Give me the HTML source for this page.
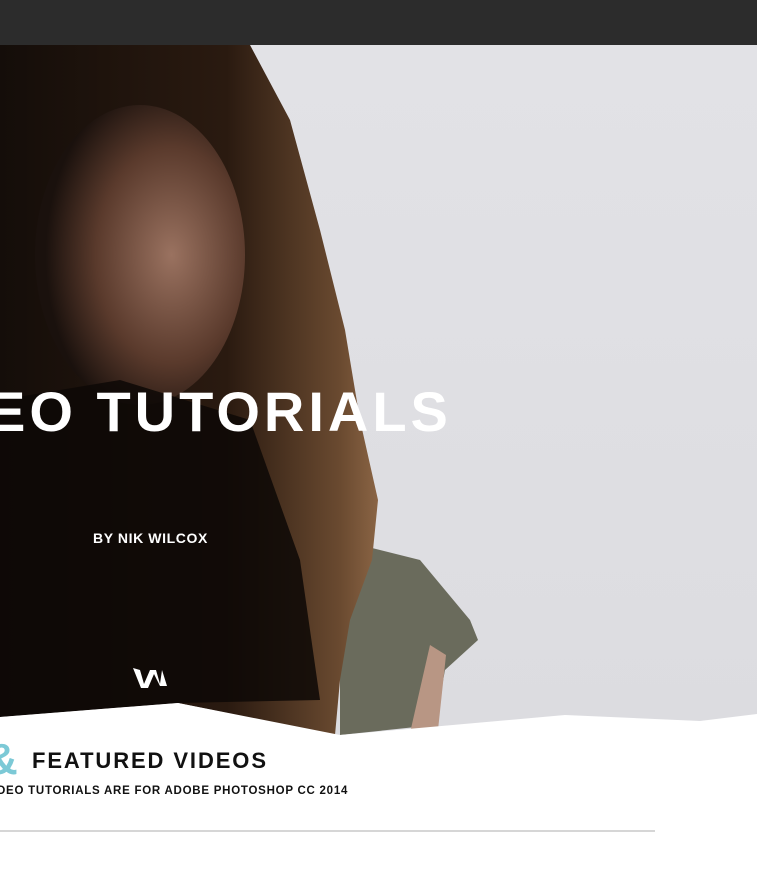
<!DOCTYPE html>
<html><head><meta charset="utf-8"><style>
html,body{margin:0;padding:0;width:757px;height:869px;overflow:hidden;background:#fff;font-family:"Liberation Sans",sans-serif}
.top{position:absolute;left:0;top:0;width:757px;height:45px;background:#2c2c2c}
svg{position:absolute;left:0;top:45px}
.t{position:absolute;color:#fff;font-weight:bold;white-space:nowrap}
</style></head><body>
<div class="top"></div>
<svg width="757" height="824" viewBox="0 45 757 824">
<defs>
<linearGradient id="bg" x1="0" y1="0" x2="0" y2="1"><stop offset="0" stop-color="#e2e2e6"/><stop offset="1" stop-color="#dcdce0"/></linearGradient>
<radialGradient id="face" cx="0.65" cy="0.5" r="0.6"><stop offset="0" stop-color="#9a7260"/><stop offset="0.6" stop-color="#5a3a2c"/><stop offset="1" stop-color="#1a110d"/></radialGradient>
<linearGradient id="hair" x1="0" y1="0" x2="1" y2="0"><stop offset="0" stop-color="#140d09"/><stop offset="0.6" stop-color="#2a1a10"/><stop offset="0.9" stop-color="#6a4a30"/><stop offset="1" stop-color="#8a6444"/></linearGradient>
</defs>
<rect x="0" y="45" width="757" height="700" fill="url(#bg)"/>
<path d="M340 540 L420 560 L470 620 L478 640 L445 670 L435 725 L340 735 Z" fill="#6a6b5c"/>
<path d="M430 645 L446 655 L438 730 L410 733 Z" fill="#b89684"/>
<path d="M0 45 L250 45 L290 120 L320 230 L345 330 L360 420 L378 500 L372 560 L350 620 L340 680 L335 735 L178 703 L0 717 Z" fill="url(#hair)"/>
<ellipse cx="140" cy="255" rx="105" ry="150" fill="url(#face)"/>
<path d="M0 400 L120 380 L250 420 L300 560 L320 700 L178 703 L0 717 Z" fill="#0d0806" opacity="0.85"/>
<path d="M0 717 L178 703 L340 735 L565 715 L700 721 L757 714 L757 869 L0 869 Z" fill="#fff"/>
<line x1="0" y1="831" x2="655" y2="831" stroke="#d6d6d6" stroke-width="2"/>
<path d="M133 668 L140 670 L144 684 L150 670 L156 670 L160 684 L162 670 L167 686 L160 686 L154 674 L148 688 L141 688 Z" fill="#fff"/>
</svg>
<div class="t" style="left:-12px;top:380px;font-size:56px;letter-spacing:4px;line-height:64px">EO TUTORIALS</div>
<div class="t" style="left:93px;top:530px;font-size:14px;letter-spacing:0.6px">BY NIK WILCOX</div>
<div style="position:absolute;left:-14px;top:738px;font-size:44px;font-weight:bold;color:#7cc9d6;line-height:44px">&amp;</div>
<div class="t" style="left:32px;top:747px;color:#111;font-size:22px;letter-spacing:1.9px;line-height:28px">FEATURED VIDEOS</div>
<div class="t" style="left:-3px;top:784px;color:#111;font-size:11.5px;letter-spacing:0.75px;line-height:14px">DEO TUTORIALS ARE FOR ADOBE PHOTOSHOP CC 2014</div>
</body></html>
